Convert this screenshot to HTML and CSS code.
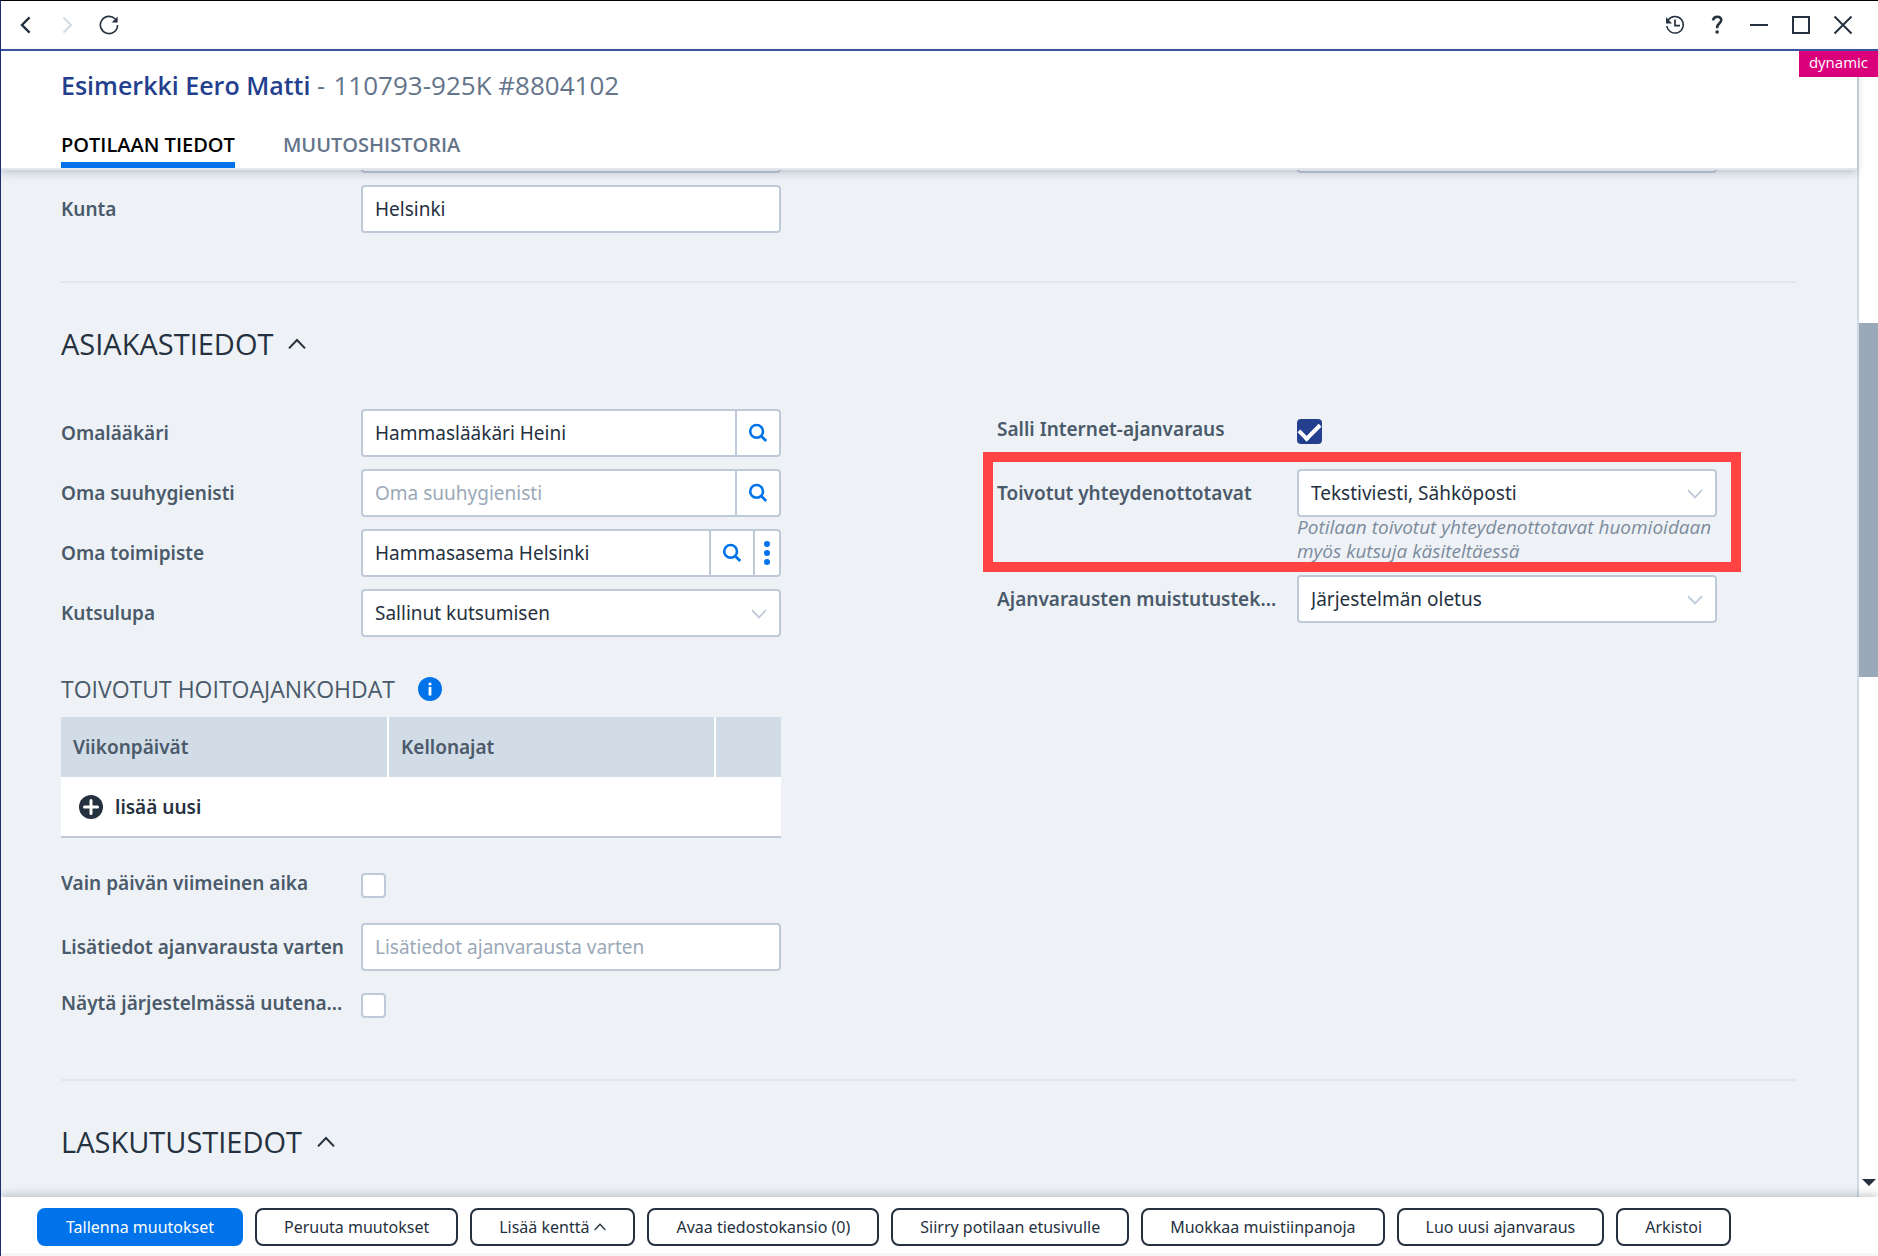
FILE: index.html
```html
<!DOCTYPE html>
<html lang="fi">
<head>
<meta charset="utf-8">
<meta name="viewport" content="width=device-width, initial-scale=1">
<title>Esimerkki Eero Matti</title>
<link rel="stylesheet" href="styles.css">
</head>
<body>
<svg class="defs" aria-hidden="true">
  <symbol id="chevron-down" viewBox="0 0 16 10"><path d="M1 1.2 8 8.4 15 1.2" fill="none" stroke="currentColor" stroke-width="1.8"/></symbol>
  <symbol id="chevron-up" viewBox="0 0 18 12"><path d="M1 10.4 9 2l8 8.4" fill="none" stroke="currentColor" stroke-width="2"/></symbol>
  <symbol id="search" viewBox="0 0 20 20"><circle cx="8.6" cy="8.4" r="6.4" fill="none" stroke="currentColor" stroke-width="2.6"/><path d="m13.2 13 5 5" fill="none" stroke="currentColor" stroke-width="2.8"/></symbol>
</svg>
<div class="window">
  <div class="titlebar">
    <div class="titlebar-group nav">
      <button class="icon-button" aria-label="Takaisin"><svg width="18" height="18" viewBox="0 0 18 18"><path d="M12.6 1.4 5 9l7.6 7.6" fill="none" stroke="currentColor" stroke-width="2.4"/></svg></button>
      <button class="icon-button" aria-label="Eteenpäin" disabled><svg width="18" height="18" viewBox="0 0 18 18"><path d="M5.4 1.4 13 9l-7.6 7.6" fill="none" stroke="currentColor" stroke-width="2"/></svg></button>
      <button class="icon-button" aria-label="Päivitä"><svg width="20" height="20" viewBox="0 0 20 20"><path d="M16.2 4A8.6 8.6 0 1 0 18.6 10" fill="none" stroke="currentColor" stroke-width="1.6"/><path d="M18.6 1.4v6h-6z" fill="currentColor"/></svg></button>
    </div>
    <div class="titlebar-group tools">
      <button class="icon-button" aria-label="Historia"><svg width="20" height="20" viewBox="0 0 20 20"><path d="M3.2 5A8.3 8.3 0 1 1 1.8 11" fill="none" stroke="currentColor" stroke-width="1.5"/><path d="M1 2v6.4h6z" fill="currentColor"/><path d="M10 4.6v6h5" fill="none" stroke="currentColor" stroke-width="1.7"/></svg></button>
      <button class="icon-button" aria-label="Ohje"><svg width="20" height="20" viewBox="0 0 20 20"><path d="M6 5.4C6.400 2.900 8 1.700 10.200 1.700c2.500 0 4 1.300 4 3.500 0 3-4 3.600-4 6.800v1.200" fill="none" stroke="currentColor" stroke-width="2.600"/><circle cx="10.100" cy="17" r="1.800" fill="currentColor"/></svg></button>
      <button class="icon-button" aria-label="Pienennä"><svg width="20" height="20" viewBox="0 0 20 20"><path d="M1 10h18" stroke="currentColor" stroke-width="2"/></svg></button>
      <button class="icon-button" aria-label="Suurenna"><svg width="20" height="20" viewBox="0 0 20 20"><rect x="2" y="2" width="16" height="16" fill="none" stroke="currentColor" stroke-width="2"/></svg></button>
      <button class="icon-button" aria-label="Sulje"><svg width="20" height="20" viewBox="0 0 20 20"><path d="m1.500 1.500 17 17m0-17-17 17" stroke="currentColor" stroke-width="2"/></svg></button>
    </div>
  </div>

  <div class="body">
    <main class="main">
      <header class="header">
        <h1 class="patient"><span class="patient-name">Esimerkki Eero Matti</span> - <span class="patient-id">110793-925K #8804102</span></h1>
        <nav class="tabs">
          <a class="tab active" href="#tiedot">POTILAAN TIEDOT</a>
          <a class="tab" href="#historia">MUUTOSHISTORIA</a>
        </nav>
      </header>

      <div class="content" id="tiedot">
        <section class="columns">
          <div class="fields">
            <div class="row"><span></span><div class="control"></div></div>
            <div class="row">
              <label class="label" for="kunta">Kunta</label>
              <div class="control"><input id="kunta" type="text" value="Helsinki"></div>
            </div>
          </div>
          <div class="fields">
            <div class="row"><span></span><div class="control"></div></div>
          </div>
        </section>

        <hr class="divider">
        <h2 class="section-title">ASIAKASTIEDOT <svg width="18" height="12"><use href="#chevron-up"/></svg></h2>

        <section class="columns">
          <div class="fields">
            <div class="row">
              <label class="label" for="laakari">Omalääkäri</label>
              <div class="control"><input id="laakari" type="text" value="Hammaslääkäri Heini"><button class="field-button" aria-label="Hae"><svg width="20" height="20"><use href="#search"/></svg></button></div>
            </div>
            <div class="row">
              <label class="label" for="suuhygienisti">Oma suuhygienisti</label>
              <div class="control"><input id="suuhygienisti" type="text" placeholder="Oma suuhygienisti"><button class="field-button" aria-label="Hae"><svg width="20" height="20"><use href="#search"/></svg></button></div>
            </div>
            <div class="row">
              <label class="label" for="toimipiste">Oma toimipiste</label>
              <div class="control"><input id="toimipiste" type="text" value="Hammasasema Helsinki"><button class="field-button" aria-label="Hae"><svg width="20" height="20"><use href="#search"/></svg></button><button class="field-button narrow" aria-label="Lisää"><svg width="8" height="26" viewBox="0 0 8 26"><g fill="currentColor"><circle cx="4" cy="4" r="3"/><circle cx="4" cy="13" r="3"/><circle cx="4" cy="22" r="3"/></g></svg></button></div>
            </div>
            <div class="row">
              <label class="label" for="kutsulupa">Kutsulupa</label>
              <div class="control"><select id="kutsulupa"><option>Sallinut kutsumisen</option></select><svg class="arrow" width="16" height="10"><use href="#chevron-down"/></svg></div>
            </div>

            <h3 class="sub-title">TOIVOTUT HOITOAJANKOHDAT
              <svg width="24" height="24" viewBox="0 0 24 24"><circle cx="12" cy="12" r="12" fill="#0073ea"/><circle cx="12" cy="7" r="1.600" fill="#fff"/><path d="M12 10v8.500" stroke="#fff" stroke-width="2.800"/></svg>
            </h3>
            <table class="times">
              <thead><tr><th>Viikonpäivät</th><th>Kellonajat</th><th class="actions"></th></tr></thead>
              <tbody><tr><td colspan="3"><button class="add"><svg width="24" height="24" viewBox="0 0 24 24"><circle cx="12" cy="12" r="12" fill="currentColor"/><path d="M12 5.500v13M5.500 12h13" stroke="#fff" stroke-width="3" stroke-linecap="round"/></svg>lisää uusi</button></td></tr></tbody>
            </table>

            <div class="row check">
              <label class="label" for="viimeinen">Vain päivän viimeinen aika</label>
              <input id="viimeinen" type="checkbox">
            </div>
            <div class="row">
              <label class="label" for="lisatiedot">Lisätiedot ajanvarausta varten</label>
              <div class="control"><input id="lisatiedot" type="text" placeholder="Lisätiedot ajanvarausta varten"></div>
            </div>
            <div class="row check">
              <label class="label" for="uutena">Näytä järjestelmässä uutena...</label>
              <input id="uutena" type="checkbox">
            </div>
          </div>

          <div class="fields">
            <div class="row check">
              <label class="label" for="internet">Salli Internet-ajanvaraus</label>
              <input id="internet" type="checkbox" checked>
            </div>
            <div class="highlight">
              <div class="row">
                <label class="label" for="yhteys">Toivotut yhteydenottotavat</label>
                <div class="control"><select id="yhteys"><option>Tekstiviesti, Sähköposti</option></select><svg class="arrow" width="16" height="10"><use href="#chevron-down"/></svg></div>
                <p class="help">Potilaan toivotut yhteydenottotavat huomioidaan myös kutsuja käsiteltäessä</p>
              </div>
            </div>
            <div class="row">
              <label class="label" for="muistutus">Ajanvarausten muistutustek...</label>
              <div class="control"><select id="muistutus"><option>Järjestelmän oletus</option></select><svg class="arrow" width="16" height="10"><use href="#chevron-down"/></svg></div>
            </div>
          </div>
        </section>

        <hr class="divider">
        <h2 class="section-title">LASKUTUSTIEDOT <svg width="18" height="12"><use href="#chevron-up"/></svg></h2>
      </div>
    </main>

    <div class="scrollbar">
      <div class="thumb"></div>
      <svg class="scroll-down" width="14" height="7" viewBox="0 0 14 7"><path d="M0 0h14L7 7z" fill="#25313e"/></svg>
    </div>
    <span class="badge">dynamic</span>
  </div>

  <footer class="footer">
    <button class="button primary">Tallenna muutokset</button>
    <button class="button">Peruuta muutokset</button>
    <button class="button">Lisää kenttä <svg width="12" height="8"><use href="#chevron-up"/></svg></button>
    <button class="button">Avaa tiedostokansio (0)</button>
    <button class="button">Siirry potilaan etusivulle</button>
    <button class="button">Muokkaa muistiinpanoja</button>
    <button class="button">Luo uusi ajanvaraus</button>
    <button class="button">Arkistoi</button>
  </footer>
</div>
</body>
</html>
```
FILE: styles.css
```css
:root {
  --ink: #25313e;
  --label: #4a5a6a;
  --muted: #64748a;
  --border: #becad8;
  --page: #eef2f7;
  --blue: #0073ea;
  --navy: #233f8e;
  --heading-font: "Open Sans", "Noto Sans", sans-serif;
}

* { box-sizing: border-box; }

body {
  margin: 0;
  font-family: "Noto Sans", "Open Sans", sans-serif;
  font-size: 19px;
  line-height: 24px;
  color: var(--ink);
}

button, input, select { font: inherit; color: inherit; }
button { background: none; border: 0; padding: 0; cursor: pointer; }

.defs { position: absolute; width: 0; height: 0; }

.window {
  display: flex;
  flex-direction: column;
  height: 100vh;
  border-top: 1px solid #000;
  border-left: 1px solid #1b2f74;
  background: #fff;
  overflow: hidden;
}

/* Title bar */
.titlebar {
  display: flex;
  justify-content: space-between;
  align-items: center;
  flex: none;
  height: 50px;
  padding: 0 25px 0 16px;
  border-bottom: 2px solid #3a559f;
}
.titlebar-group { display: flex; align-items: center; gap: 22px; }
.nav { gap: 23px; }
.icon-button { display: flex; }
.icon-button:disabled { color: #d0dbe6; }

/* Body: scrolled content and its scrollbar */
.body { position: relative; display: flex; flex: 1; min-height: 0; }
.main { flex: 1; min-width: 0; display: flex; flex-direction: column; background: var(--page); }

.header {
  position: relative;
  z-index: 1;
  flex: none;
  padding: 16px 60px 0;
  background: #fff;
  border-bottom: 2px solid #e1e7ed;
  box-shadow: 0 3px 8px rgba(60, 70, 80, .25);
  font-family: var(--heading-font);
}
.patient { margin: 0; font-size: 25px; font-weight: 400; line-height: 36px; color: var(--muted); }
.patient-name { font-weight: 600; color: var(--navy); }
.patient-id { margin-left: 2px; font-size: 26px; }
.tabs { display: flex; gap: 48px; margin-top: 25px; }
.tab {
  height: 40px;
  padding-top: 5px;
  border-bottom: 6px solid transparent;
  font-size: 20px;
  font-weight: 600;
  text-decoration: none;
  color: var(--muted);
}
.tab.active { color: #000; border-color: var(--blue); }

.content { flex: 1; min-height: 0; overflow: hidden; padding: 0 60px; }
.columns { display: grid; grid-template-columns: 1fr 1fr; gap: 136px; }
.columns:first-child { margin-top: -45px; }
.fields { display: flex; flex-direction: column; gap: 12px; max-width: 720px; }
.row { display: grid; grid-template-columns: 300px 1fr; align-items: center; }
.label {
  overflow: hidden;
  white-space: nowrap;
  text-overflow: ellipsis;
  font-weight: 600;
  color: var(--label);
}

.control {
  position: relative;
  display: flex;
  height: 48px;
  border: 2px solid var(--border);
  border-radius: 4px;
  background: #fff;
}
.control input, .control select {
  flex: 1;
  min-width: 0;
  padding: 0 12px;
  border: 0;
  background: none;
  appearance: none;
  outline: none;
}
.control input::placeholder { color: #9aa9b8; opacity: 1; }
.arrow { position: absolute; right: 12px; top: 18px; color: var(--border); pointer-events: none; }
.field-button {
  display: flex;
  align-items: center;
  justify-content: center;
  width: 44px;
  border-left: 2px solid var(--border);
  color: var(--blue);
}
.field-button.narrow { width: 26px; }

.check { height: 48px; align-items: start; }
.check .label { padding-top: 8px; }
.check input {
  display: grid;
  place-items: center;
  width: 25px;
  height: 25px;
  margin: 10px 0 0;
  appearance: none;
  border: 2px solid var(--border);
  border-radius: 4px;
  background: #fff;
}
.check input:checked { background: var(--navy); border-color: var(--navy); }
.check input:checked::after {
  content: "";
  width: 17px;
  height: 9px;
  margin-top: -5px;
  border: solid #fff;
  border-width: 0 0 4px 4px;
  transform: rotate(-45deg);
}

.help { grid-column: 2; margin: -2px 0 0; font-family: var(--heading-font); font-style: italic; color: #7c8b9c; }

/* Callout frame drawn over the fields it surrounds */
.highlight { position: relative; }
.highlight::after {
  content: "";
  position: absolute;
  inset: -17px -24px -9px -14px;
  border: 10px solid #ff4242;
  pointer-events: none;
}

.divider { height: 2px; margin: 48px 0 0; border: 0; background: #e2e7ee; }
.section-title {
  display: flex;
  align-items: center;
  gap: 15px;
  margin: 41px 0 45px;
  font-family: var(--heading-font);
  font-size: 29px;
  font-weight: 400;
  line-height: 40px;
}
.sub-title {
  display: flex;
  align-items: center;
  gap: 23px;
  margin: 24px 0 0;
  font-family: var(--heading-font);
  font-size: 23px;
  font-weight: 400;
  line-height: 32px;
  color: var(--label);
}

.times { width: 100%; margin-bottom: 13px; border-collapse: collapse; table-layout: fixed; background: #fff; border-bottom: 2px solid var(--border); }
.times th {
  height: 60px;
  padding: 0 12px;
  text-align: left;
  font-weight: 600;
  color: var(--label);
  background: #d2dce6;
  border-right: 2px solid #fff;
}
.times th.actions { width: 66px; border-right: 0; }
.times td { height: 60px; padding: 0 18px; }
.add { display: flex; align-items: center; gap: 12px; font-weight: 600; }

/* Scrollbar */
.scrollbar {
  display: flex;
  flex-direction: column;
  justify-content: space-between;
  align-items: center;
  width: 21px;
  padding: 272px 0 11px;
  border-left: 2px solid #cfdae6;
  background: #fff;
}
.thumb { width: 100%; height: 41%; background: #9aa9b8; }
.badge {
  position: absolute;
  z-index: 2;
  top: 0;
  right: 0;
  padding: 0 10px 4px;
  font-family: var(--heading-font);
  font-size: 15px;
  line-height: 22px;
  color: #fff;
  background: #da007c;
}

/* Footer actions */
.footer {
  position: relative;
  z-index: 1;
  display: flex;
  flex: none;
  align-items: flex-start;
  gap: 12px;
  height: 59px;
  padding: 11px 36px 0;
  background: #fff;
  border-bottom: 3px solid #f6f6f6;
  box-shadow: 0 -3px 8px rgba(60, 70, 80, .25);
}
.button {
  display: flex;
  align-items: center;
  gap: 5px;
  height: 38px;
  padding: 0 27px;
  border: 2px solid var(--ink);
  border-radius: 8px;
  font-size: 16px;
  white-space: nowrap;
}
.primary { color: #fff; background: var(--blue); border-color: var(--blue); }
```
